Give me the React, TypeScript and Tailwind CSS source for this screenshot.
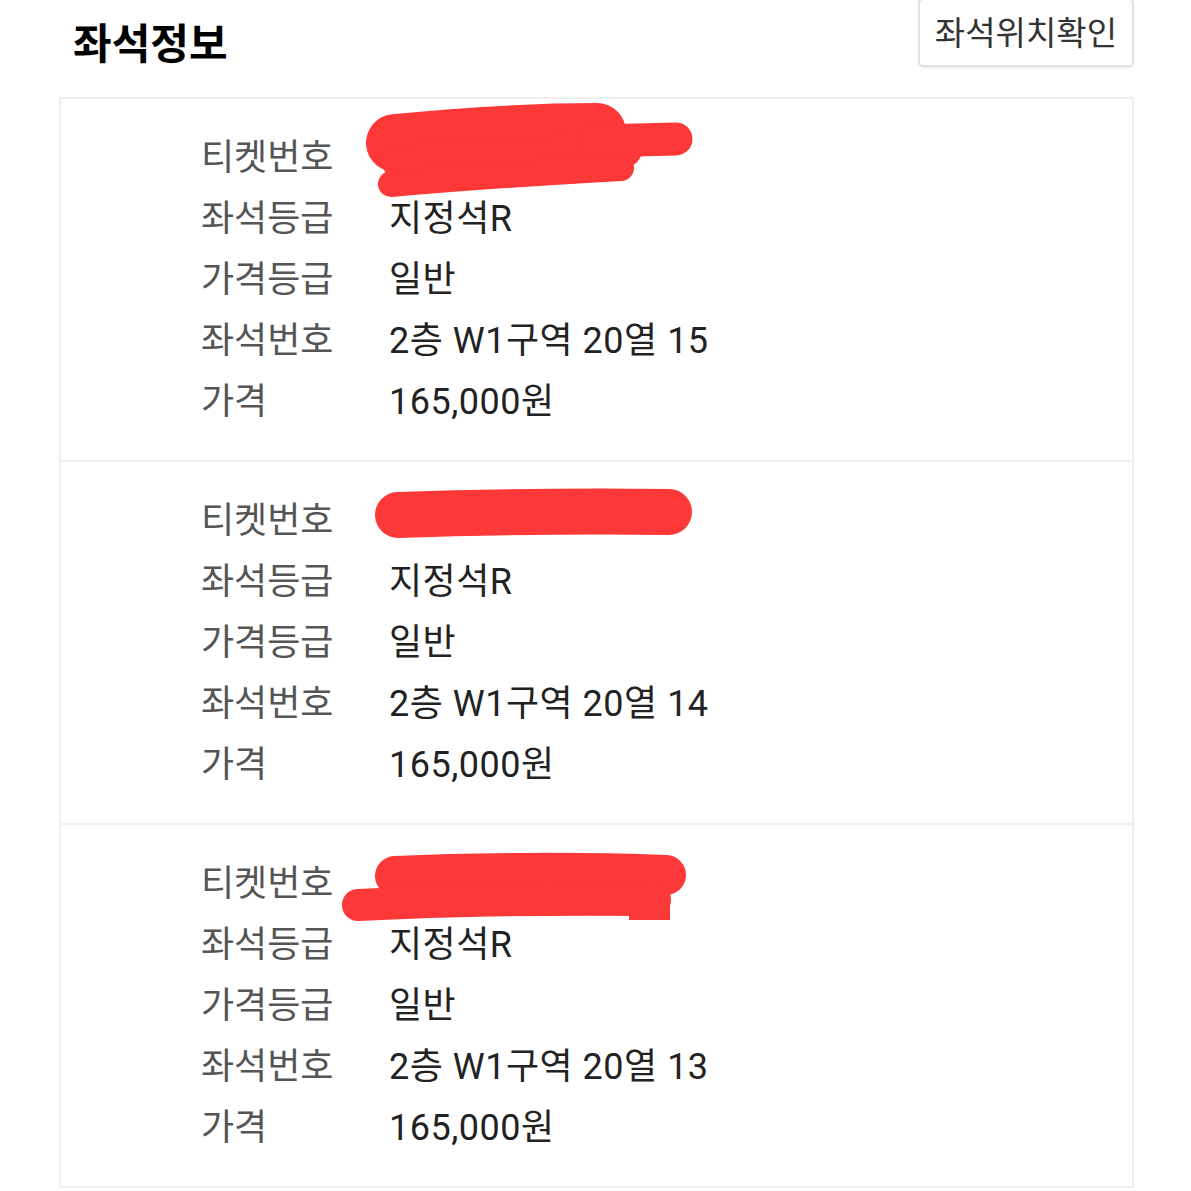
import React from 'react';

const tickets = [
  { seat: '2층 W1구역 20열 15', mark: 1 },
  { seat: '2층 W1구역 20열 14', mark: 2 },
  { seat: '2층 W1구역 20열 13', mark: 3 },
];

const RED = '#fc3838';

// hand-drawn redaction marks, coordinates relative to the value cell's top-left
function Scribble({ kind }: { kind: number }) {
  return (
    <svg
      className="pointer-events-none absolute left-[-60px] top-[-42px] overflow-visible"
      width="400"
      height="140"
      viewBox="0 0 400 140"
    >
      {kind === 1 && (
        <g stroke={RED} strokeLinecap="round" fill="none">
          <path d="M66 55 C140 48 200 44 268 44" strokeWidth="58" />
          <path d="M70 74 C160 68 230 64 296 62" strokeWidth="34" />
          <path d="M268 53 L347 51" strokeWidth="33" />
          <path d="M62 96 C150 88 220 84 292 80" strokeWidth="26" />
        </g>
      )}
      {kind === 2 && (
        <g stroke={RED} strokeLinecap="round" fill="none">
          <path d="M69 64 C160 61 260 60 340 61" strokeWidth="46" />
        </g>
      )}
      {kind === 3 && (
        <g stroke={RED} strokeLinecap="round" fill="none">
          <path d="M66 62 C150 58 260 58 337 61" strokeWidth="40" />
          <path d="M29 91 C120 86 220 85 326 86" strokeWidth="32" />
          <path d="M300 74 L341 74 L341 106 L300 106 Z" fill={RED} strokeWidth="0" />
        </g>
      )}
    </svg>
  );
}

function Row({ label, children }: { label: string; children?: React.ReactNode }) {
  return (
    <div className="flex h-[61px] items-center">
      <div className="w-[188px] shrink-0 text-[#555555]">{label}</div>
      <div className="relative tracking-[0.5px] text-[#222222]">{children}</div>
    </div>
  );
}

export default function App() {
  return (
    <div
      className="h-[1191px] w-[1191px] overflow-hidden bg-white"
      style={{ fontFamily: 'Roboto, "Noto Sans CJK KR", sans-serif' }}
    >
      <div className="ml-[59px] w-[1075px]">
        <div className="flex h-[97px] items-start justify-between">
          <h1 className="pl-[14px] pt-[20px] text-[42px] font-bold leading-[50px] text-black">좌석정보</h1>
          <button className="-mt-[2px] h-[69px] rounded-[5px] border-2 border-[#e2e2e2] bg-white px-[15px] pt-[2px] text-[33px] leading-none text-[#333333] shadow-[0_1px_2px_rgba(0,0,0,0.08)]">
            좌석위치확인
          </button>
        </div>
        <div className="border-2 border-[#efefef] text-[36px]">
          {tickets.map((t, i) => (
            <section
              key={t.seat}
              className={
                i === 0
                  ? 'pb-[28px] pl-[140px] pt-[28px]'
                  : 'border-t-2 border-[#efefef] pb-[28px] pl-[140px] pt-[28px]'
              }
            >
              <Row label="티켓번호">
                <span className="inline-block h-[40px] w-[10px]" />
                <Scribble kind={t.mark} />
              </Row>
              <Row label="좌석등급">지정석R</Row>
              <Row label="가격등급">일반</Row>
              <Row label="좌석번호">{t.seat}</Row>
              <Row label="가격">165,000원</Row>
            </section>
          ))}
        </div>
      </div>
    </div>
  );
}
